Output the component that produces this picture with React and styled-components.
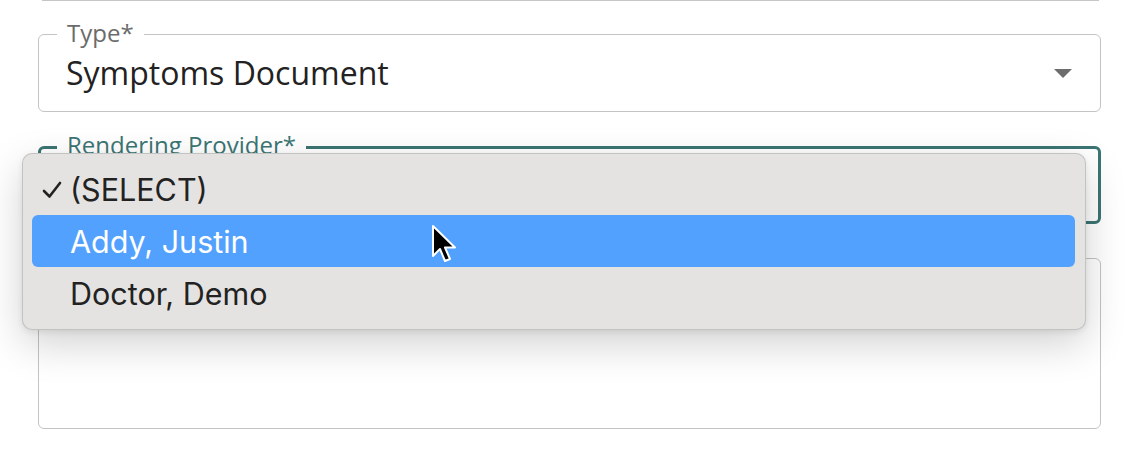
import React from "react";
import styled, { createGlobalStyle } from "styled-components";

const GlobalStyle = createGlobalStyle`
  html, body { margin: 0; padding: 0; background: #ffffff; }
  * { box-sizing: border-box; }
`;

const Page = styled.div`
  position: relative;
  width: 1148px;
  height: 452px;
  overflow: hidden;
  padding: 0 47px 0 38px;
  font-family: "Open Sans", sans-serif;
`;

const PrevFieldEdge = styled.div`
  height: 1px;
  margin: 0 2px 0 4px;
  background: #c6c6c6;
`;

const Form = styled.div`
  display: flex;
  flex-direction: column;
  gap: 34px;
  margin-top: 33px;
`;

const Field = styled.div`
  position: relative;
  height: ${(p) => p.$height}px;
  border: ${(p) => (p.$focused ? "3px solid #3b7573" : "1px solid #c4c4c4")};
  border-radius: 6px;
  display: flex;
  align-items: center;
  padding: 0 ${(p) => (p.$focused ? 26 : 28)}px 0 ${(p) => (p.$focused ? 25 : 27)}px;
`;

const Label = styled.span`
  position: absolute;
  top: ${(p) => (p.$focused ? -20 : -18)}px;
  left: ${(p) => (p.$focused ? 16 : 18)}px;
  padding: 0 10px;
  background: #ffffff;
  font-size: 24px;
  line-height: 32px;
  color: ${(p) => (p.$focused ? "#3b7573" : "#6b6b6b")};
`;

const Value = styled.span`
  flex: 1;
  font-size: 32px;
  color: #222222;
  line-height: 40px;
`;

const Caret = styled.span`
  width: 0;
  height: 0;
  border-left: 9px solid transparent;
  border-right: 9px solid transparent;
  border-top: 9px solid #6d6d6d;
`;

const Menu = styled.div`
  position: absolute;
  left: 22px;
  top: 153px;
  width: 1064px;
  height: 177px;
  padding: 9px 10px 9px 9px;
  background: #e4e3e1;
  border: 1px solid rgba(0, 0, 0, 0.14);
  border-radius: 10px;
  box-shadow: 0 14px 40px rgba(0, 0, 0, 0.18), 0 2px 6px rgba(0, 0, 0, 0.08);
  display: flex;
  flex-direction: column;
  font-family: Inter, "Liberation Sans", sans-serif;
`;

const Option = styled.div`
  height: 52px;
  border-radius: 6px;
  display: flex;
  align-items: center;
  padding-left: ${(p) => (p.$checked ? 10 : 38)}px;
  font-size: 30.5px;
  color: ${(p) => (p.$active ? "#ffffff" : "#222222")};
  background: ${(p) => (p.$active ? "#52a1fe" : "transparent")};
`;

const Check = styled.svg`
  width: 20px;
  height: 18px;
  margin-right: 8px;
  margin-top: 2px;
`;

const Cursor = styled.svg`
  position: absolute;
  left: 430px;
  top: 224px;
  width: 28px;
  height: 42px;
`;

const options = [
  { label: "(SELECT)", checked: true },
  { label: "Addy, Justin", active: true },
  { label: "Doctor, Demo" },
];

export default function App() {
  return (
    <>
      <GlobalStyle />
      <Page>
        <PrevFieldEdge />
        <Form>
          <Field $height={78}>
            <Label>Type*</Label>
            <Value>Symptoms Document</Value>
            <Caret />
          </Field>
          <Field $height={78} $focused>
            <Label $focused>Rendering Provider*</Label>
          </Field>
          <Field $height={171} />
        </Form>
        <Menu>
          {options.map((o) => (
            <Option key={o.label} $checked={o.checked} $active={o.active}>
              {o.checked && (
                <Check viewBox="0 0 20 18">
                  <path d="M2 10 L7.5 15.5 L18 2" fill="none" stroke="#222" strokeWidth="2.6" strokeLinecap="round" strokeLinejoin="round" />
                </Check>
              )}
              {o.label}
            </Option>
          ))}
        </Menu>
        <Cursor viewBox="0 0 28 42">
          <path
            d="M3 2 L3 32 L10 25 L15 37 L20 35 L15 23.5 L25 23.5 Z"
            fill="#000"
            stroke="#fff"
            strokeWidth="2"
            strokeLinejoin="round"
          />
        </Cursor>
      </Page>
    </>
  );
}
